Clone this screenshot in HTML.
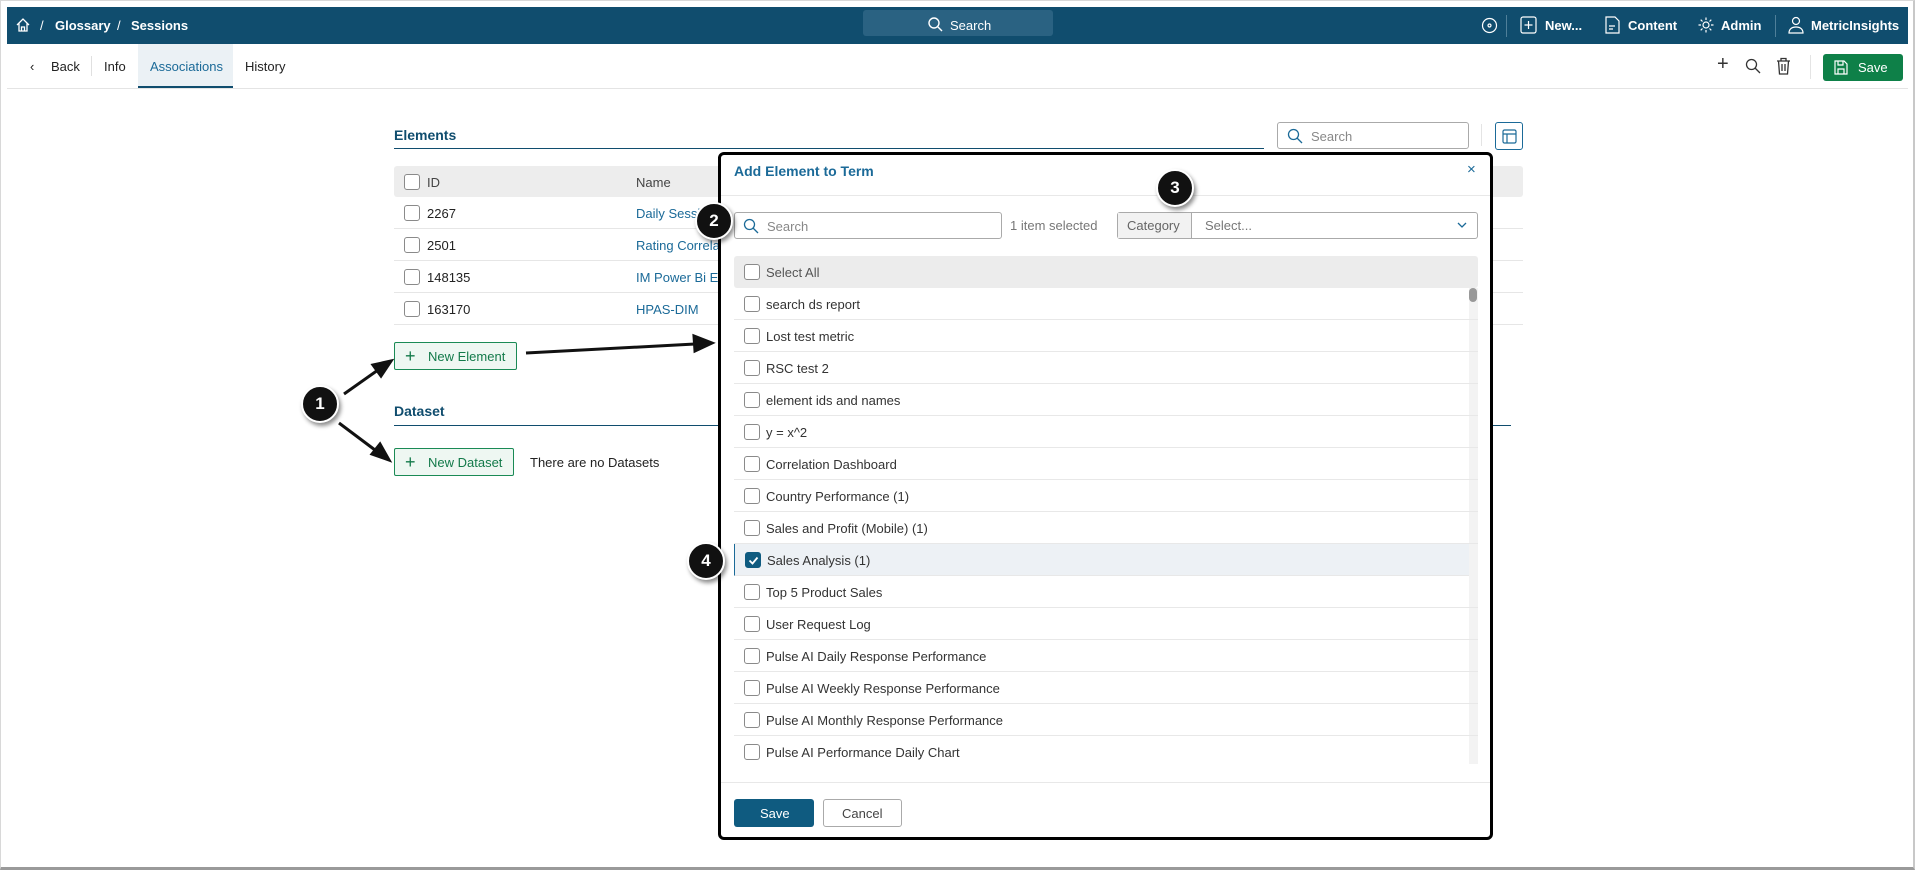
<!DOCTYPE html>
<html><head><meta charset="utf-8"><style>
*{box-sizing:border-box;margin:0;padding:0}
body{width:1915px;height:870px;background:#fff;font-family:"Liberation Sans",sans-serif;font-size:13px;color:#222;position:relative;overflow:hidden}
.a{position:absolute}
.frame{left:0;top:0;width:1915px;height:870px;border:1px solid #d8d8d8;border-bottom:3px solid #9a9a9a;border-right:2px solid #c8c8c8}
.top{left:7px;top:7px;width:1901px;height:37px;background:#104d6e;color:#fff}
.top .t{position:absolute;top:11px;font-size:13px;font-weight:bold}
.cb{position:absolute;width:16px;height:16px;border:1px solid #8a8a8a;border-radius:3px;background:#fff}
.row{position:absolute;left:394px;width:1129px;height:32px;border-bottom:1px solid #e6e6e6}
.row span{position:absolute;top:9px}
.lnk{color:#1b6a98}
.btn{position:absolute;border:1px solid #1a8a55;background:#eef7f2;color:#137a4a;border-radius:2px;font-size:13px}
.mi{position:absolute;left:734px;width:744px;height:32px;border-bottom:1px solid #e8e8e8}
.mi .cb{left:10px;top:8px}
.mi span{position:absolute;left:32px;top:9px;color:#333}
.call{position:absolute;width:38px;height:38px;border-radius:50%;background:#111;border:2px solid #fff;box-shadow:2px 3px 4px rgba(0,0,0,.45);color:#fff;font-weight:bold;font-size:17px;text-align:center;line-height:34px}
</style></head><body>
<div class="a frame"></div>
<div class="a top">
 <svg class="a" style="left:8px;top:10px" width="16" height="16" viewBox="0 0 16 16" fill="none" stroke="#fff" stroke-width="1.3"><path d="M2 8L8 2l6 6M4 6.5V14h8V6.5M6.5 14V10h3v4"/></svg>
 <span class="t" style="left:33px;font-weight:normal">/</span>
 <span class="t" style="left:48px">Glossary</span>
 <span class="t" style="left:110px;font-weight:normal">/</span>
 <span class="t" style="left:124px">Sessions</span>
 <div class="a" style="left:856px;top:3px;width:190px;height:26px;background:#2a6282;border-radius:3px"></div>
 <svg class="a" style="left:920px;top:9px" width="16" height="16" viewBox="0 0 16 16" fill="none" stroke="#fff" stroke-width="1.4"><circle cx="7" cy="7" r="5"/><path d="M11 11l4 4"/></svg>
 <span class="t" style="left:943px;font-weight:normal">Search</span>
 <svg class="a" style="left:1474px;top:10px" width="17" height="17" viewBox="0 0 17 17" fill="none" stroke="#fff" stroke-width="1.2"><circle cx="8.5" cy="8.5" r="7"/><circle cx="8.5" cy="8.5" r="1.5"/></svg>
 <div class="a" style="left:1499px;top:8px;width:1px;height:22px;background:#4f7f99"></div>
 <svg class="a" style="left:1513px;top:9px" width="17" height="18" viewBox="0 0 17 18" fill="none" stroke="#fff" stroke-width="1.2"><rect x="1" y="1" width="15" height="16" rx="2"/><path d="M8.5 5v8M4.5 9h8"/></svg>
 <span class="t" style="left:1538px">New...</span>
 <svg class="a" style="left:1598px;top:9px" width="15" height="18" viewBox="0 0 15 18" fill="none" stroke="#fff" stroke-width="1.2"><path d="M1 1h9l4 4v12H1z M4 10h6M4 13h4"/></svg>
 <span class="t" style="left:1621px">Content</span>
 <svg class="a" style="left:1690px;top:9px" width="18" height="18" viewBox="0 0 18 18" fill="none" stroke="#fff" stroke-width="1.2"><circle cx="9" cy="9" r="3"/><path d="M9 1.5v2.5M9 14v2.5M1.5 9H4M14 9h2.5M3.7 3.7l1.8 1.8M12.5 12.5l1.8 1.8M3.7 14.3l1.8-1.8M12.5 5.5l1.8-1.8"/></svg>
 <span class="t" style="left:1714px">Admin</span>
 <div class="a" style="left:1768px;top:8px;width:1px;height:22px;background:#4f7f99"></div>
 <svg class="a" style="left:1781px;top:9px" width="16" height="18" viewBox="0 0 16 18" fill="none" stroke="#fff" stroke-width="1.2"><circle cx="8" cy="5" r="3.5"/><path d="M1 17c0-4 3-6 7-6s7 2 7 6z"/></svg>
 <span class="t" style="left:1804px">MetricInsights</span>
</div>
<!-- nav -->
<div class="a" style="left:7px;top:88px;width:1901px;height:1px;background:#e4e4e4"></div>
<div class="a" style="left:138px;top:44px;width:95px;height:44px;background:#ebf1f5;border-bottom:2px solid #104d6e"></div>
<span class="a" style="left:30px;top:59px">&#8249;</span>
<span class="a" style="left:51px;top:59px">Back</span>
<div class="a" style="left:91px;top:56px;width:1px;height:20px;background:#e0e0e0"></div>
<span class="a" style="left:104px;top:59px">Info</span>
<span class="a" style="left:150px;top:59px;color:#1b6a98">Associations</span>
<span class="a" style="left:245px;top:59px">History</span>
<span class="a" style="left:1717px;top:53px;font-size:20px;color:#333">+</span>
<svg class="a" style="left:1745px;top:58px" width="16" height="16" viewBox="0 0 16 16" fill="none" stroke="#333" stroke-width="1.3"><circle cx="6.5" cy="6.5" r="5"/><path d="M10 10l5 5"/></svg>
<svg class="a" style="left:1776px;top:57px" width="15" height="18" viewBox="0 0 15 18" fill="none" stroke="#333" stroke-width="1.3"><path d="M1 4h13M5 4V1.5h5V4M2.5 4l1 13h8l1-13M6 7v7M9 7v7"/></svg>
<div class="a" style="left:1810px;top:55px;width:1px;height:24px;background:#e4e4e4"></div>
<div class="a" style="left:1823px;top:54px;width:80px;height:27px;background:#0e8048;border-radius:3px;color:#fff"><svg class="a" style="left:11px;top:6px" width="14" height="15" viewBox="0 0 14 15" fill="none" stroke="#fff" stroke-width="1.2"><path d="M1 1h9l3 3v10H1z M4 1v4h5V1M4 14V9h6v5"/></svg><span class="a" style="left:35px;top:6px">Save</span></div>
<!-- elements -->
<span class="a" style="left:394px;top:127px;font-weight:bold;font-size:14px;color:#104d6e">Elements</span>
<div class="a" style="left:394px;top:148px;width:870px;height:1px;background:#104d6e"></div>
<div class="a" style="left:1277px;top:122px;width:192px;height:27px;border:1px solid #aaa;border-radius:3px"></div>
<svg class="a" style="left:1287px;top:128px" width="16" height="16" viewBox="0 0 16 16" fill="none" stroke="#1b6a98" stroke-width="1.3"><circle cx="6.5" cy="6.5" r="5"/><path d="M10 10l5 5"/></svg>
<span class="a" style="left:1311px;top:129px;color:#888">Search</span>
<div class="a" style="left:1481px;top:124px;width:1px;height:22px;background:#e4e4e4"></div>
<div class="a" style="left:1495px;top:122px;width:28px;height:28px;border:1px solid #1b6a98;border-radius:3px"><svg class="a" style="left:6px;top:6px" width="15" height="15" viewBox="0 0 15 15" fill="none" stroke="#1b6a98" stroke-width="1.2"><rect x="1" y="1" width="13" height="13" rx="1.5"/><path d="M1 5h13M5 5v9"/></svg></div>
<div class="a" style="left:394px;top:166px;width:1129px;height:31px;background:#ededed;border-radius:3px"></div>
<div class="cb" style="left:404px;top:174px"></div>
<span class="a" style="left:427px;top:175px;color:#444">ID</span>
<span class="a" style="left:636px;top:175px;color:#444">Name</span>
<div class="row" style="top:197px"><div class="cb" style="left:10px;top:8px"></div><span style="left:33px">2267</span><span class="lnk" style="left:242px">Daily Sessi</span></div>
<div class="row" style="top:229px"><div class="cb" style="left:10px;top:8px"></div><span style="left:33px">2501</span><span class="lnk" style="left:242px">Rating Correla</span></div>
<div class="row" style="top:261px"><div class="cb" style="left:10px;top:8px"></div><span style="left:33px">148135</span><span class="lnk" style="left:242px">IM Power Bi Ex</span></div>
<div class="row" style="top:293px"><div class="cb" style="left:10px;top:8px"></div><span style="left:33px">163170</span><span class="lnk" style="left:242px">HPAS-DIM</span></div>
<div class="btn" style="left:394px;top:342px;width:123px;height:28px"><span class="a" style="left:10px;top:3px;font-size:18px">+</span><span class="a" style="left:33px;top:6px">New Element</span></div>
<span class="a" style="left:394px;top:403px;font-weight:bold;font-size:14px;color:#104d6e">Dataset</span>
<div class="a" style="left:394px;top:425px;width:1117px;height:1px;background:#104d6e"></div>
<div class="btn" style="left:394px;top:448px;width:120px;height:28px"><span class="a" style="left:10px;top:3px;font-size:18px">+</span><span class="a" style="left:33px;top:6px">New Dataset</span></div>
<span class="a" style="left:530px;top:455px">There are no Datasets</span>
<!-- modal -->
<div class="a" style="left:718px;top:152px;width:775px;height:688px;background:#fff;border:3px solid #000;border-radius:6px"></div>
<span class="a" style="left:734px;top:163px;font-weight:bold;font-size:14px;color:#1b6a98">Add Element to Term</span>
<span class="a" style="left:1467px;top:161px;color:#1b6a98;font-size:15px">×</span>
<div class="a" style="left:721px;top:195px;width:769px;height:1px;background:#e8e8e8"></div>
<div class="a" style="left:734px;top:212px;width:268px;height:27px;border:1px solid #aaa;border-radius:3px"></div>
<svg class="a" style="left:743px;top:218px" width="16" height="16" viewBox="0 0 16 16" fill="none" stroke="#1b6a98" stroke-width="1.3"><circle cx="6.5" cy="6.5" r="5"/><path d="M10 10l5 5"/></svg>
<span class="a" style="left:767px;top:219px;color:#888">Search</span>
<span class="a" style="left:1010px;top:218px;color:#777">1 item selected</span>
<div class="a" style="left:1117px;top:212px;width:361px;height:27px;border:1px solid #aaa;border-radius:3px"></div>
<div class="a" style="left:1118px;top:213px;width:74px;height:25px;background:#f2f2f2;border-right:1px solid #aaa"></div>
<span class="a" style="left:1127px;top:218px;color:#666">Category</span>
<span class="a" style="left:1205px;top:218px;color:#777">Select...</span>
<svg class="a" style="left:1457px;top:222px" width="10" height="7" viewBox="0 0 10 7" fill="none" stroke="#1b6a98" stroke-width="1.3"><path d="M1 1l4 4 4-4"/></svg>
<div class="a" style="left:734px;top:256px;width:744px;height:32px;background:#ececec;border-radius:3px"></div>
<div class="cb" style="left:744px;top:264px"></div>
<span class="a" style="left:766px;top:265px;color:#555">Select All</span>
<div class="a" style="left:1469px;top:288px;width:9px;height:476px;background:#f3f3f3"></div>
<div class="a" style="left:1469px;top:288px;width:8px;height:14px;background:#999;border-radius:4px"></div>
<div class="mi" style="top:288px"><div class="cb"></div><span>search ds report</span></div>
<div class="mi" style="top:320px"><div class="cb"></div><span>Lost test metric</span></div>
<div class="mi" style="top:352px"><div class="cb"></div><span>RSC test 2</span></div>
<div class="mi" style="top:384px"><div class="cb"></div><span>element ids and names</span></div>
<div class="mi" style="top:416px"><div class="cb"></div><span>y = x^2</span></div>
<div class="mi" style="top:448px"><div class="cb"></div><span>Correlation Dashboard</span></div>
<div class="mi" style="top:480px"><div class="cb"></div><span>Country Performance (1)</span></div>
<div class="mi" style="top:512px"><div class="cb"></div><span>Sales and Profit (Mobile) (1)</span></div>
<div class="mi" style="top:544px;background:#edf1f5;border-left:1px solid #1b6a98;width:735px"><div class="cb" style="background:#0f5b80;border-color:#0f5b80"><svg style="position:absolute;left:2px;top:2px" width="11" height="11" viewBox="0 0 11 11" fill="none" stroke="#fff" stroke-width="1.8"><path d="M1.5 5.5l3 3 5-6"/></svg></div><span>Sales Analysis (1)</span></div>
<div class="mi" style="top:576px"><div class="cb"></div><span>Top 5 Product Sales</span></div>
<div class="mi" style="top:608px"><div class="cb"></div><span>User Request Log</span></div>
<div class="mi" style="top:640px"><div class="cb"></div><span>Pulse AI Daily Response Performance</span></div>
<div class="mi" style="top:672px"><div class="cb"></div><span>Pulse AI Weekly Response Performance</span></div>
<div class="mi" style="top:704px"><div class="cb"></div><span>Pulse AI Monthly Response Performance</span></div>
<div class="mi" style="top:736px;border-bottom:none"><div class="cb"></div><span>Pulse AI Performance Daily Chart</span></div>
<div class="a" style="left:721px;top:782px;width:769px;height:1px;background:#e8e8e8"></div>
<div class="a" style="left:734px;top:799px;width:80px;height:28px;background:#0f5b80;border-radius:3px;color:#fff"><span class="a" style="left:26px;top:7px">Save</span></div>
<div class="a" style="left:823px;top:799px;width:79px;height:28px;border:1px solid #aaa;border-radius:3px"><span class="a" style="left:18px;top:6px;color:#444">Cancel</span></div>
<!-- arrows -->
<svg class="a" style="left:0;top:0" width="1915" height="870">
<g stroke="#111" stroke-width="3" fill="#111">
<line x1="344" y1="394" x2="378" y2="370"/><path d="M391 361l-18 4 8 11z"/>
<line x1="339" y1="423" x2="375" y2="450"/><path d="M389 460l-9-16-8 10z"/>
<line x1="526" y1="353" x2="695" y2="344"/><path d="M712 343l-18-7 1 15z"/>
</g></svg>
<div class="call" style="left:301px;top:385px">1</div>
<div class="call" style="left:695px;top:202px">2</div>
<div class="call" style="left:1156px;top:169px">3</div>
<div class="call" style="left:687px;top:542px">4</div>
</body></html>
